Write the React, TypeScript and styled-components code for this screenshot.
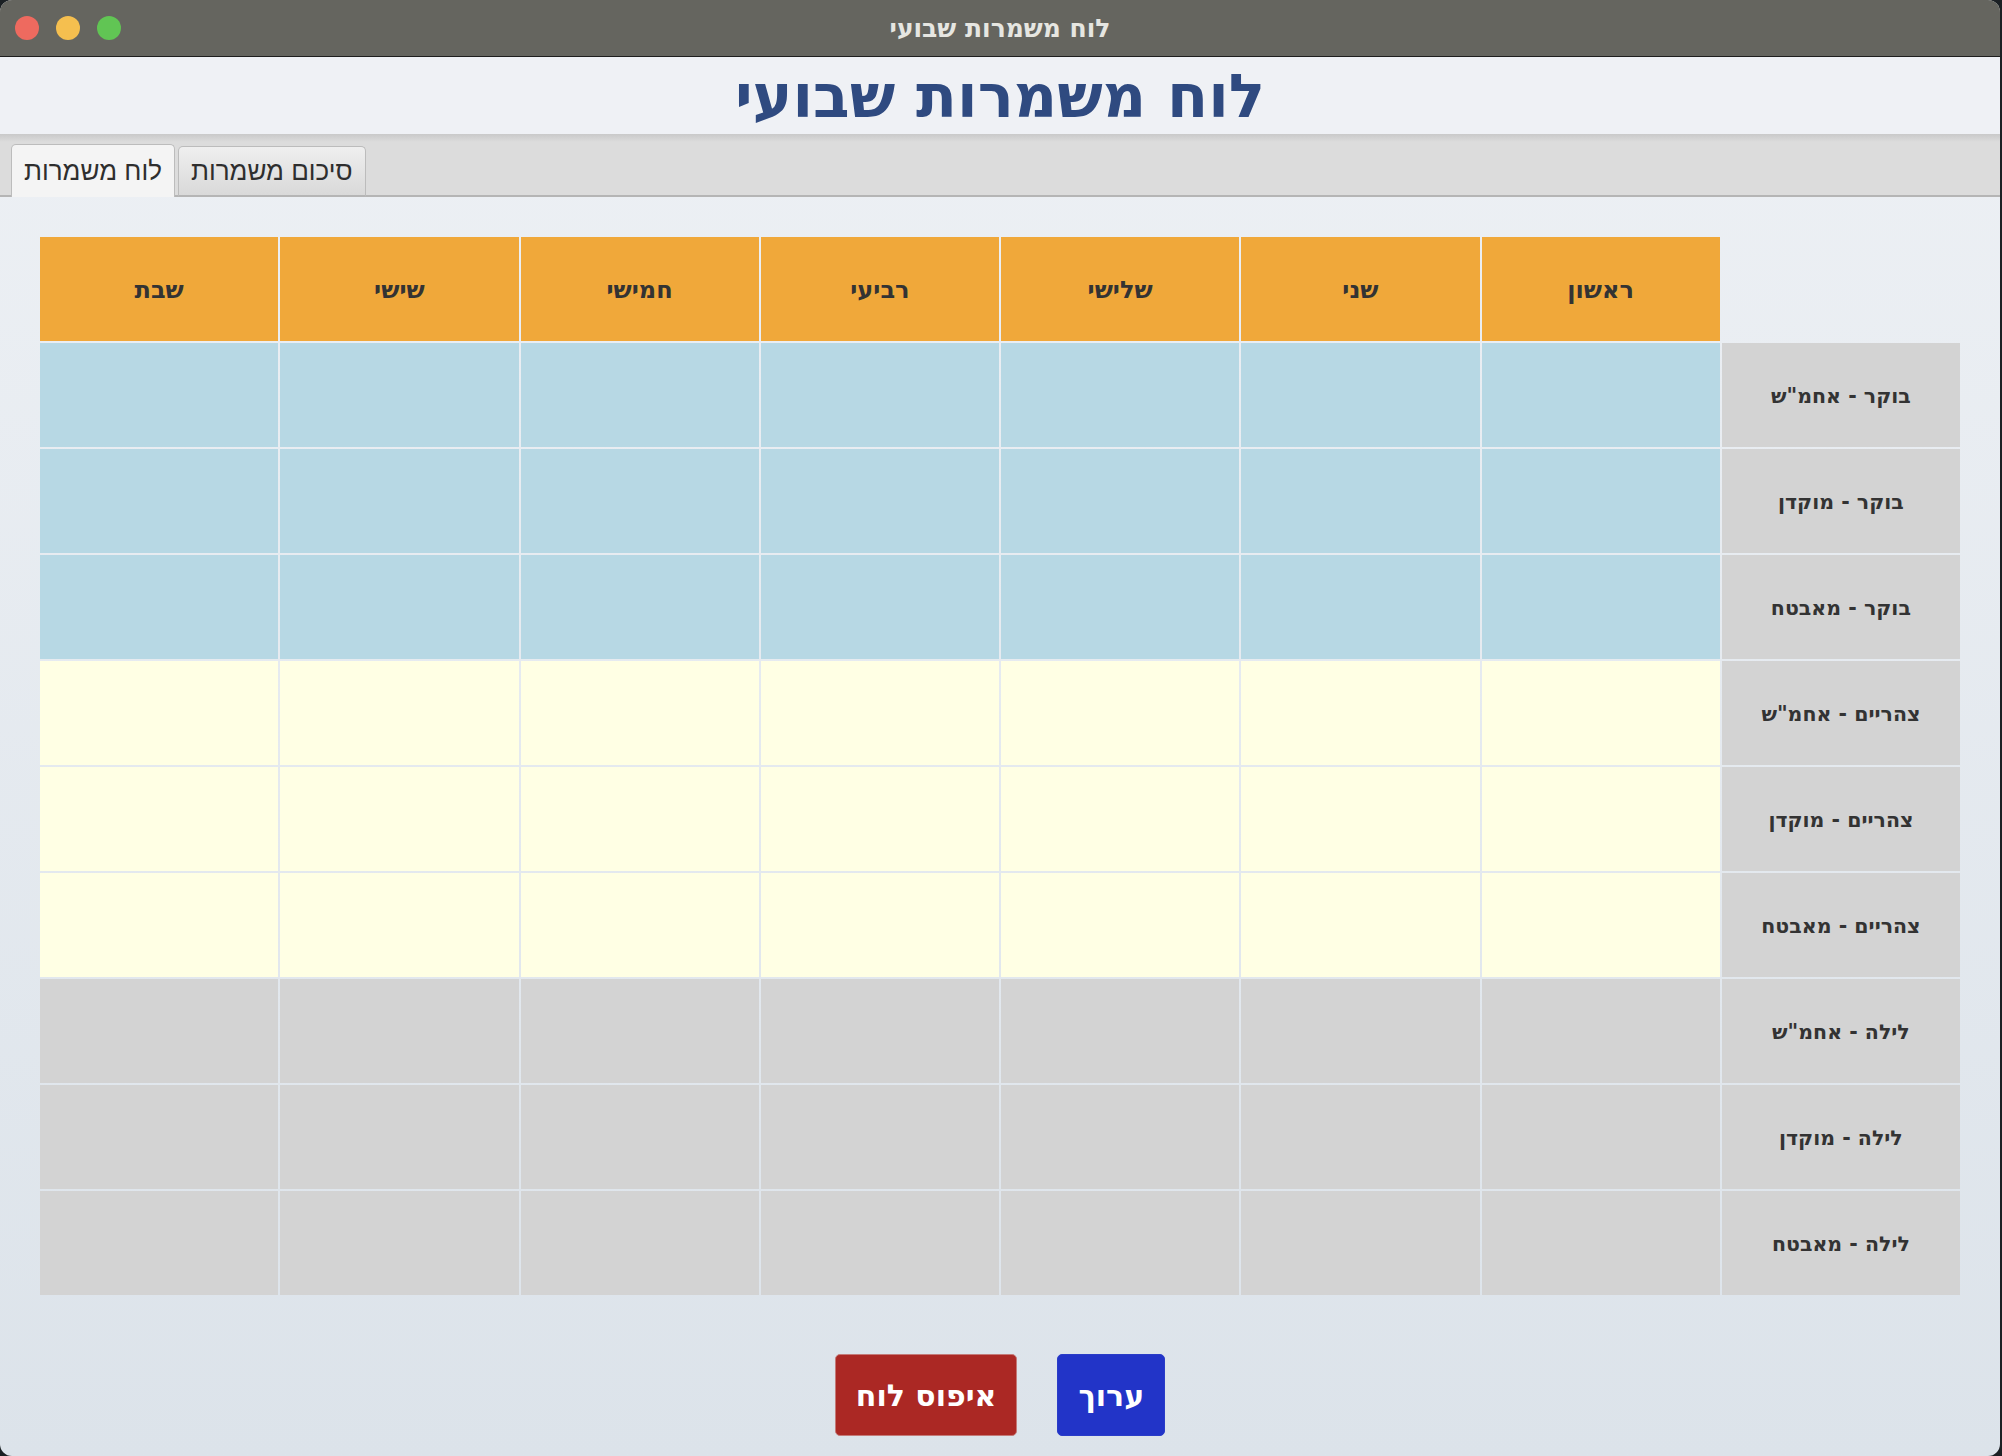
import React from "react";
import styled, { createGlobalStyle, css } from "styled-components";

const GlobalStyle = createGlobalStyle`
  html, body {
    margin: 0;
    padding: 0;
    background: #1b2024;
  }
  body {
    font-family: "DejaVu Sans", "Liberation Sans", sans-serif;
  }
  * { box-sizing: border-box; }
`;

const Window = styled.div`
  width: 2000px;
  height: 1456px;
  border-radius: 12px;
  overflow: hidden;
  display: flex;
  flex-direction: column;
  background: linear-gradient(180deg, #eef1f5 0%, #dce3ea 100%);
`;

const TitleBar = styled.div`
  height: 57px;
  flex: none;
  background: #65655f;
  border-bottom: 1px solid #1e1e1e;
  display: grid;
  grid-template-columns: 1fr auto 1fr;
  align-items: center;
`;

const Lights = styled.div`
  display: flex;
  gap: 17px;
  padding-left: 15px;
`;

const Light = styled.span<{ $color: string }>`
  width: 24px;
  height: 24px;
  border-radius: 50%;
  background: ${(p) => p.$color};
`;

const WindowTitle = styled.div`
  direction: rtl;
  font-family: "DejaVu Sans", sans-serif;
  font-weight: bold;
  font-size: 25px;
  color: #e6e6e1;
  padding-top: 1px;
`;

const Header = styled.header`
  height: 77px;
  flex: none;
  background: #eff1f5;
  display: flex;
  align-items: center;
  justify-content: center;
`;

const PageTitle = styled.h1`
  margin: 0;
  direction: rtl;
  font-family: "DejaVu Sans", sans-serif;
  font-weight: bold;
  font-size: 60px;
  line-height: 1;
  color: #2f4a80;
`;

const TabBar = styled.div`
  height: 63px;
  flex: none;
  background: linear-gradient(180deg, #c9c9c9 0px, #dcdcdc 8px, #dcdcdc 100%);
  border-bottom: 2px solid #b5b5b5;
  display: flex;
  align-items: flex-end;
  gap: 3px;
  padding-left: 11px;
`;

const Tab = styled.div<{ $active?: boolean }>`
  height: 51px;
  margin-bottom: -2px;
  padding: 0 12px;
  display: flex;
  align-items: center;
  direction: rtl;
  font-family: "Liberation Sans", "DejaVu Sans", sans-serif;
  font-size: 26px;
  color: #2e2e2e;
  border: 1px solid #bcbcbc;
  border-bottom: none;
  border-radius: 5px 5px 0 0;
  ${(p) =>
    p.$active
      ? css`
          background: #f4f4f4;
          height: 53px;
        `
      : css`
          background: linear-gradient(180deg, #efefef 0%, #d9d9d9 100%);
          border-bottom: 2px solid #b5b5b5;
          margin-bottom: -2px;
        `}
`;

const Content = styled.main`
  flex: 1;
  padding: 40px 40px 0;
  display: flex;
  flex-direction: column;
  align-items: center;
`;

const Grid = styled.div`
  width: 1920px;
  direction: rtl;
  display: grid;
  grid-template-columns: repeat(8, 1fr);
  grid-auto-rows: 104px;
  gap: 2px;
`;

type CellKind = "corner" | "day" | "label" | "morning" | "noon" | "night";

const cellBg: Record<CellKind, string> = {
  corner: "transparent",
  day: "#f0a83a",
  label: "#d3d3d3",
  morning: "#b7d8e4",
  noon: "#ffffe4",
  night: "#d3d3d3",
};

const Cell = styled.div<{ $kind: CellKind }>`
  background: ${(p) => cellBg[p.$kind]};
  display: flex;
  align-items: center;
  justify-content: center;
  font-family: "DejaVu Sans", sans-serif;
  font-weight: bold;
  color: #333333;
  font-size: ${(p) => (p.$kind === "day" ? "24px" : "20.5px")};
  padding-top: 2px;
`;

const Actions = styled.div`
  margin-top: 59px;
  display: flex;
  direction: rtl;
  gap: 40px;
  align-items: center;
`;

const ActionButton = styled.button<{ $tone: "blue" | "red" }>`
  height: 82px;
  padding: 0 20px;
  border-radius: 5px;
  font-family: "DejaVu Sans", sans-serif;
  font-weight: bold;
  font-size: 30px;
  color: #ffffff;
  direction: rtl;
  cursor: pointer;
  ${(p) =>
    p.$tone === "blue"
      ? css`
          background: #2234c8;
          border: 1px solid #2a3cc8;
        `
      : css`
          background: #ab2824;
          border: 1px solid #c47a78;
        `}
`;

const days = ["ראשון", "שני", "שלישי", "רביעי", "חמישי", "שישי", "שבת"];

const shifts: { label: string; kind: CellKind }[] = [
  { label: "בוקר - אחמ\"ש", kind: "morning" },
  { label: "בוקר - מוקדן", kind: "morning" },
  { label: "בוקר - מאבטח", kind: "morning" },
  { label: "צהריים - אחמ\"ש", kind: "noon" },
  { label: "צהריים - מוקדן", kind: "noon" },
  { label: "צהריים - מאבטח", kind: "noon" },
  { label: "לילה - אחמ\"ש", kind: "night" },
  { label: "לילה - מוקדן", kind: "night" },
  { label: "לילה - מאבטח", kind: "night" },
];

export default function App() {
  return (
    <>
      <GlobalStyle />
      <Window>
        <TitleBar>
          <Lights>
            <Light $color="#ee6a5f" />
            <Light $color="#f5bf4f" />
            <Light $color="#61c554" />
          </Lights>
          <WindowTitle>לוח משמרות שבועי</WindowTitle>
          <span />
        </TitleBar>
        <Header>
          <PageTitle>לוח משמרות שבועי</PageTitle>
        </Header>
        <TabBar>
          <Tab $active>לוח משמרות</Tab>
          <Tab>סיכום משמרות</Tab>
        </TabBar>
        <Content>
          <Grid>
            <Cell $kind="corner" />
            {days.map((d) => (
              <Cell key={d} $kind="day">
                {d}
              </Cell>
            ))}
            {shifts.map((s) => (
              <React.Fragment key={s.label}>
                <Cell $kind="label">{s.label}</Cell>
                {days.map((d) => (
                  <Cell key={d} $kind={s.kind} />
                ))}
              </React.Fragment>
            ))}
          </Grid>
          <Actions>
            <ActionButton $tone="blue">ערוך</ActionButton>
            <ActionButton $tone="red">איפוס לוח</ActionButton>
          </Actions>
        </Content>
      </Window>
    </>
  );
}
